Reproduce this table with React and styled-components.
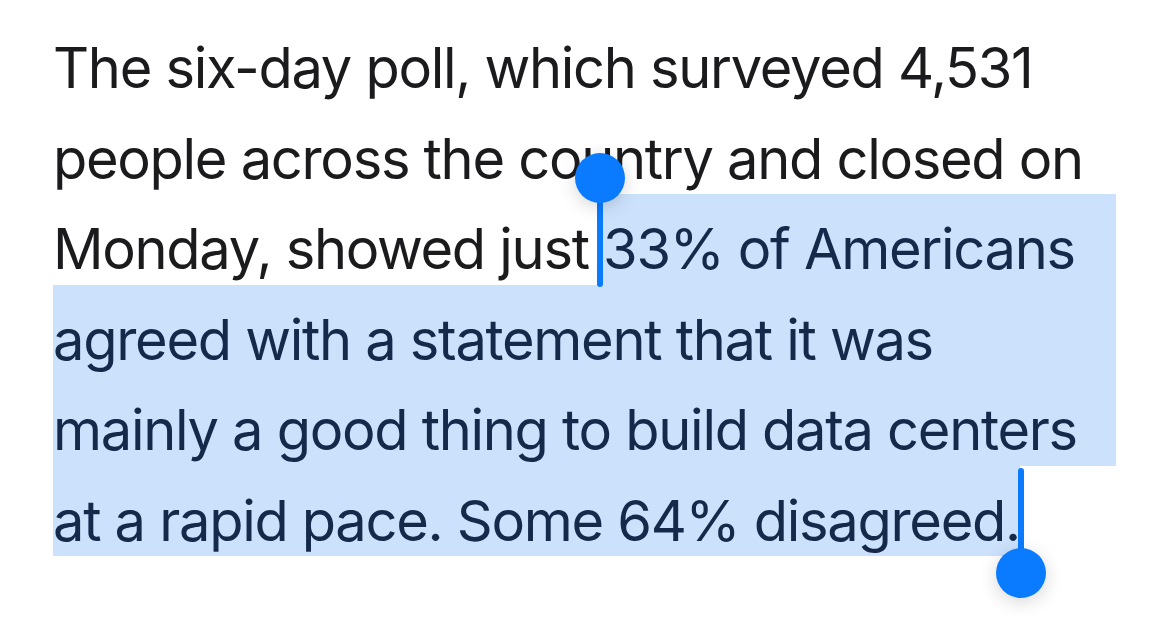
import React from "react";
import styled, { createGlobalStyle } from "styled-components";

const GlobalStyle = createGlobalStyle`
  html, body {
    margin: 0;
    padding: 0;
    background: #ffffff;
  }
  body {
    font-family: Inter, "Noto Sans", "Liberation Sans", sans-serif;
    -webkit-font-smoothing: antialiased;
  }
`;

const Page = styled.div`
  width: 1170px;
  height: 621px;
  overflow: hidden;
  background: #ffffff;
`;

const Article = styled.div`
  width: 1063px;
  margin-left: 53px;
  padding-top: 13px;
  font-size: 56px;
  letter-spacing: -1.3px;
  color: #1b1b1d;
`;

// one line of the paragraph; $selected paints the whole line as highlighted
const Row = styled.div`
  display: flex;
  height: 90.5px;
  box-sizing: border-box;
  padding-top: 21px;
  line-height: 69.5px;
  white-space: pre;
  background: ${(p) => (p.$selected ? "#cce2fc" : "transparent")};
  color: ${(p) => (p.$selected ? "#15294a" : "inherit")};
`;

const Selected = styled.span`
  position: relative;
  display: block;
  margin-top: -21px;
  padding-top: 21px;
  background: #cce2fc;
  color: #15294a;
  flex: ${(p) => (p.$grow ? 1 : "none")};
`;

const Stem = styled.span`
  position: absolute;
  width: 6px;
  border-radius: 3px;
  background: #0a7aff;
`;

const StartStem = styled(Stem)`
  left: -6px;
  top: 7px;
  height: 86px;
`;

const EndStem = styled(Stem)`
  right: -4px;
  top: 2px;
  height: 90px;
`;

const Knob = styled.span`
  position: absolute;
  width: 50px;
  height: 50px;
  border-radius: 50%;
  background: #0a7aff;
  box-shadow: 0 4px 18px rgba(0, 0, 0, 0.16);
`;

const StartKnob = styled(Knob)`
  left: -28px;
  top: -41px;
`;

const EndKnob = styled(Knob)`
  right: -26px;
  top: 82px;
`;

export default function App() {
  return (
    <Page>
      <GlobalStyle />
      <Article>
        <Row>The six-day poll, which surveyed 4,531</Row>
        <Row>people across the country and closed on</Row>
        <Row>
          Monday, showed just{" "}
          <Selected $grow>
            33% of Americans
            <StartStem />
            <StartKnob />
          </Selected>
        </Row>
        <Row $selected>agreed with a statement that it was</Row>
        <Row $selected>mainly a good thing to build data centers</Row>
        <Row>
          <Selected>
            at a rapid pace. Some 64% disagreed.
            <EndStem />
            <EndKnob />
          </Selected>
        </Row>
      </Article>
    </Page>
  );
}
